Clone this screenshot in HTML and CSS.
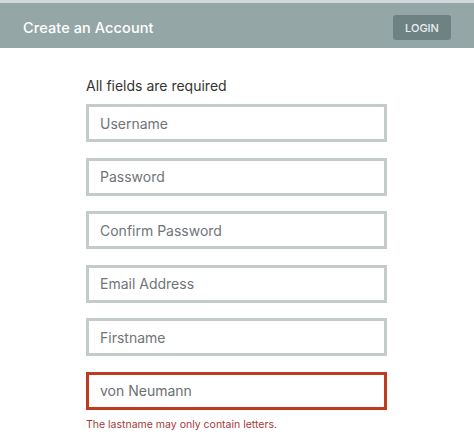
FILE: index.html
```html
<!DOCTYPE html>
<html>
<head>
<meta charset="utf-8">
<link rel="stylesheet" href="styles.css">
</head>
<body>
<div class="topstrip"></div>
<header class="header">
  <h1 class="title">Create an Account</h1>
  <button class="login">LOGIN</button>
</header>
<main class="form">
  <p class="note">All fields are required</p>
  <div class="field"><input class="input" placeholder="Username"></div>
  <div class="field"><input class="input" placeholder="Password"></div>
  <div class="field"><input class="input" placeholder="Confirm Password"></div>
  <div class="field"><input class="input" placeholder="Email Address"></div>
  <div class="field"><input class="input" placeholder="Firstname"></div>
  <div class="field"><input class="input input-error" value="von Neumann"></div>
  <p class="error">The lastname may only contain letters.</p>
</main>
</body>
</html>
```
FILE: styles.css
```css
* { box-sizing: border-box; }
html, body { margin: 0; padding: 0; background: #fff; }
body { font-family: Inter, "Noto Sans", sans-serif; width: 474px; height: 442px; overflow: hidden; }
.topstrip { height: 3px; background: #cfd7da; }
.header {
  height: 45px;
  background: #95a6a6;
  display: flex;
  align-items: center;
  justify-content: space-between;
  padding: 4px 23px 0 23px;
}
.title {
  margin: 0;
  font-size: 14.5px;
  font-weight: 500;
  color: #fff;
  letter-spacing: 0.1px;
}
.login {
  width: 58px;
  height: 25px;
  border: none;
  border-radius: 3px;
  background: #6e8283;
  color: #e9eeee;
  font-family: inherit;
  font-size: 11px;
  font-weight: 500;
  padding: 0;
}
.form {
  padding: 0 0 0 86px;
  width: 387px;
  display: flex;
  flex-direction: column;
}
.note {
  margin: 28px 0 0 0;
  height: 19px;
  font-size: 14px;
  color: #333;
  line-height: 19px;
}
.field { margin-top: 9px; }
.field + .field { margin-top: 15.6px; }
.input {
  display: block;
  width: 301px;
  height: 38px;
  border: 3px solid #c3cccb;
  padding: 0 11px;
  font-family: inherit;
  font-size: 14px;
  color: #6b6f72;
  background: #fff;
  outline: none;
}
.input::placeholder { color: #707478; }
.input-error { border-color: #bf3a1e; color: #6b6f72; }
.error {
  margin: 8px 0 0 0;
  font-size: 10.5px;
  color: #a33a3a;
  line-height: 14px;
}
```
